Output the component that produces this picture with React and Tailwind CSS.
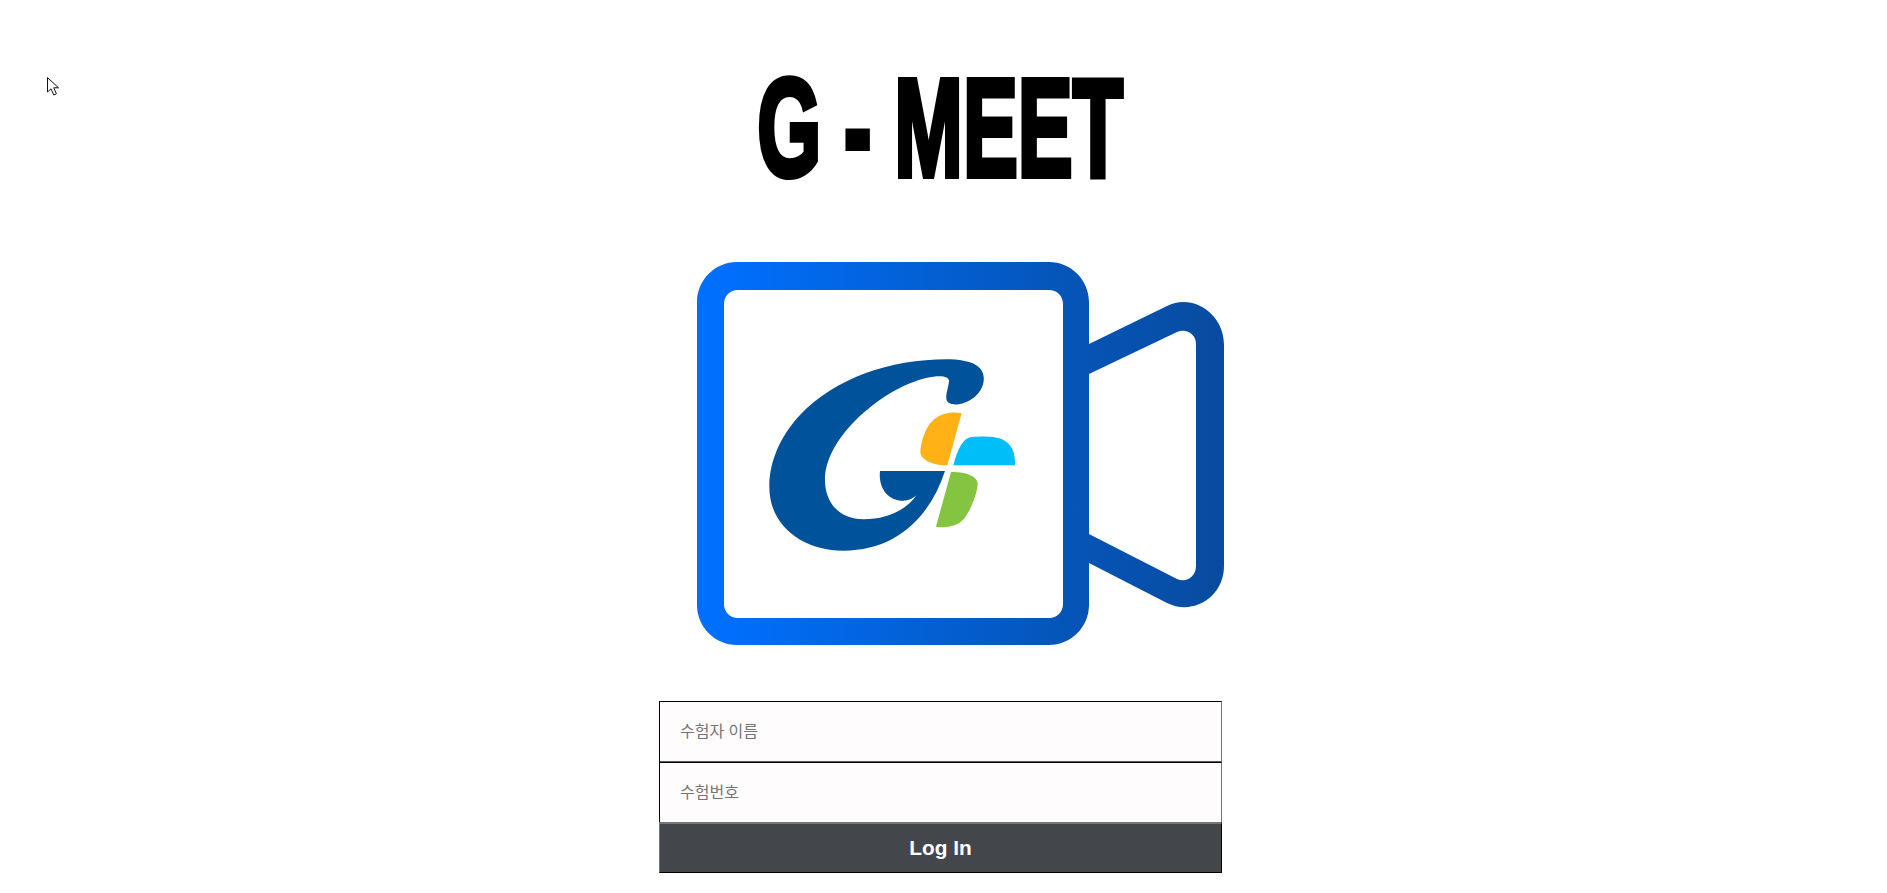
const Cursor = () => (
  <svg className="absolute left-[46px] top-[76px]" width="14" height="22" viewBox="0 0 14 22">
    <path d="M1.5 1.5V16L5 12.8L7.8 19L10.4 17.8L7.7 11.8H12.5Z" fill="#fff" stroke="#111" strokeWidth="1" />
  </svg>
);

const CameraLogo = () => (
  <svg width="560" height="400" viewBox="680 250 560 400">
    <defs>
      <linearGradient id="camBlue" gradientUnits="userSpaceOnUse" x1="697" y1="0" x2="1224" y2="0">
        <stop offset="0.05" stopColor="#006ffd" />
        <stop offset="0.7" stopColor="#0555b8" />
        <stop offset="1" stopColor="#084ba0" />
      </linearGradient>
    </defs>
    <path
      fillRule="evenodd"
      fill="url(#camBlue)"
      d="M737 262H1049C1071 262 1089 280 1089 302V344L1167 306C1193 293 1224 314 1224 345V566C1224 597 1193 616 1167 603L1089 563V605C1089 627 1071 645 1049 645H737C715 645 697 627 697 605V302C697 280 715 262 737 262ZM738 290C730 290 724 296 724 304V604C724 612 730 618 738 618H1049C1057 618 1063 612 1063 604V304C1063 296 1057 290 1049 290ZM1089 374V534L1177 579C1186 583 1196 577 1196 566V344C1196 334 1186 328 1177 332Z"
    />
    <g transform="translate(750 340) scale(0.3333)">
      <path
        fill="#00529b"
        d="M585 393H390C385 440 410 482 460 482C475 482 490 475 500 465C470 510 410 538 340 538C270 538 225 490 225 420C225 300 370 175 480 130C540 105 600 100 597 125C595 145 585 165 590 180C597 200 640 198 675 170C700 150 712 110 690 85C670 62 620 58 590 58C420 58 255 115 150 225C90 290 58 365 58 440C58 560 160 632 280 632C440 632 540 530 585 393Z"
      />
      <path fill="#ffb116" d="M635 220L592 376C560 376 512 365 511 335C512 310 525 265 545 245C570 218 610 214 635 220Z" />
      <path fill="#00bef7" d="M610 376H795C797 340 785 310 755 297C735 288 690 288 665 291C640 295 625 320 610 376Z" />
      <path fill="#84c441" d="M603 396L558 560C590 565 630 560 650 525C670 495 683 450 683 430C680 405 640 395 603 396Z" />
    </g>
  </svg>
);

export default function App() {
  return (
    <div className="relative h-[893px] w-[1881px] overflow-hidden bg-white font-['Liberation_Sans',sans-serif]">
      <Cursor />
      <div className="flex flex-col items-center">
        <h1 className="mt-[58px] h-[140px] scale-x-[0.588] text-[140px] leading-[140px] font-bold whitespace-nowrap text-black [-webkit-text-stroke:6px_black]">
          G - MEET
        </h1>
        <div className="mt-[52px] ml-[39px] h-[400px]">
          <CameraLogo />
        </div>
        <form className="mt-[51px] flex w-[563px] flex-col">
          <input
            placeholder="수험자 이름"
            className="h-[61px] w-full border border-black border-r-[#767676] border-b-[#555] bg-[#fffcfe] px-5 font-['Liberation_Sans','Noto_Sans_CJK_KR',sans-serif] text-[16px] placeholder:text-[#757575]"
          />
          <input
            placeholder="수험번호"
            className="h-[60px] w-full border border-black border-r-[#767676] border-b-0 bg-[#fffcfe] px-5 font-['Liberation_Sans','Noto_Sans_CJK_KR',sans-serif] text-[16px] placeholder:text-[#757575]"
          />
          <button
            type="button"
            className="h-[51px] w-full border border-t-2 border-[#767676] border-r-black border-b-black bg-[#43474b] text-[20.8px] font-bold text-white"
          >
            Log In
          </button>
        </form>
      </div>
    </div>
  );
}
